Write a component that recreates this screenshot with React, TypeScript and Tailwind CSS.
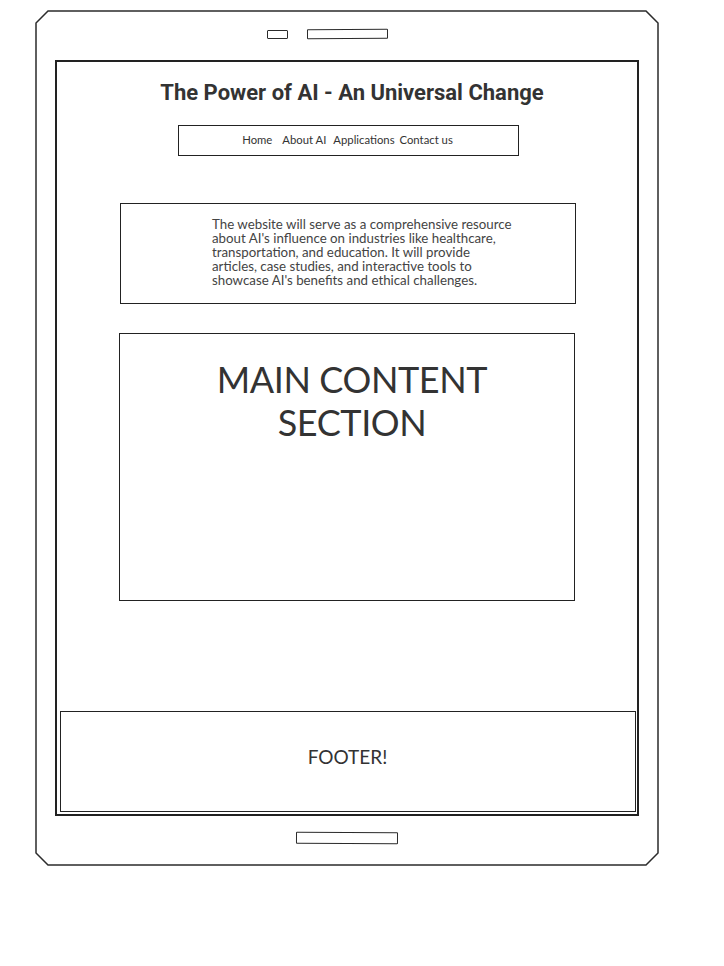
export default function App() {
    const navItems = ["Home", "About AI", "Applications", "Contact us"];

    return (
        <div className="min-h-[966px] w-[724px] bg-white pl-[35px] pt-[10px]">

            {/* Tablet */}
            <div className="relative flex h-[856px] w-[624px] flex-col items-center">
                <svg
                    className="absolute inset-0"
                    width="624"
                    height="856"
                    viewBox="0 0 624 856"
                    fill="none"
                >
                    <path
                        d="M13 1 L611 1 L623 13 L623 843 L611 855 L13 855 L1 843 L1 13 Z"
                        stroke="#2b2b2b"
                        strokeWidth="1.5"
                    />
                </svg>

                {/* Speaker */}
                <div className="relative mr-[40px] flex h-[50px] items-center gap-[19px] pb-[2px]">
                    <div className="h-[9px] w-[21px] rounded-[1px] border-[1.5px] border-[#2b2b2b]" />
                    <div className="h-[10px] w-[81px] -rotate-[0.4deg] rounded-[1px] border-[1.5px] border-[#2b2b2b]" />
                </div>

                {/* Screen */}
                <div className="relative flex h-[756px] w-[584px] flex-col items-center border-2 border-[#222] bg-white">
                    <h1 className="mt-[17px] ml-[10px] font-['Roboto',sans-serif] text-[22px] font-bold leading-[28px] text-[#333]">
                        The Power of AI - An Universal Change
                    </h1>

                    <nav className="mt-[18px] ml-[2px] flex h-[31px] w-[341px] items-center justify-center border border-[#222] pl-[2px] pr-[3px] font-['Lato',sans-serif] text-[11.3px] text-[#333]">
                        <span className="mr-[10px]">{navItems[0]}</span>
                        <span className="mr-[7px]">{navItems[1]}</span>
                        <span className="mr-[5px]">{navItems[2]}</span>
                        <span>{navItems[3]}</span>
                    </nav>

                    <div className="mt-[47px] ml-[2px] h-[101px] w-[456px] border border-[#222] pt-[13px] pl-[91px] font-['Lato',sans-serif] text-[13.3px] leading-[14px] text-[#444]">
                        The website will serve as a comprehensive resource
                        <br />
                        about AI's influence on industries like healthcare,
                        <br />
                        transportation, and education. It will provide
                        <br />
                        articles, case studies, and interactive tools to
                        <br />
                        showcase AI's benefits and ethical challenges.
                    </div>

                    <div className="mt-[29px] h-[268px] w-[456px] border border-[#222] pt-[24px] pl-[10px] text-center font-['Lato',sans-serif] text-[36px] font-normal leading-[43px] tracking-[-0.4px] text-[#333]">
                        MAIN CONTENT
                        <br />
                        SECTION
                    </div>

                    <footer className="mt-auto mb-[2px] ml-[1px] flex h-[101px] w-[576px] items-center justify-center border border-[#222] pb-[8px] font-['Lato',sans-serif] text-[19px] text-[#333]">
                        FOOTER!
                    </footer>
                </div>

                {/* Home button */}
                <div className="relative mt-[16px] h-[12px] w-[102px] rotate-[0.3deg] rounded-[1px] border-[1.5px] border-[#2b2b2b]" />
            </div>

        </div>
    );
}
